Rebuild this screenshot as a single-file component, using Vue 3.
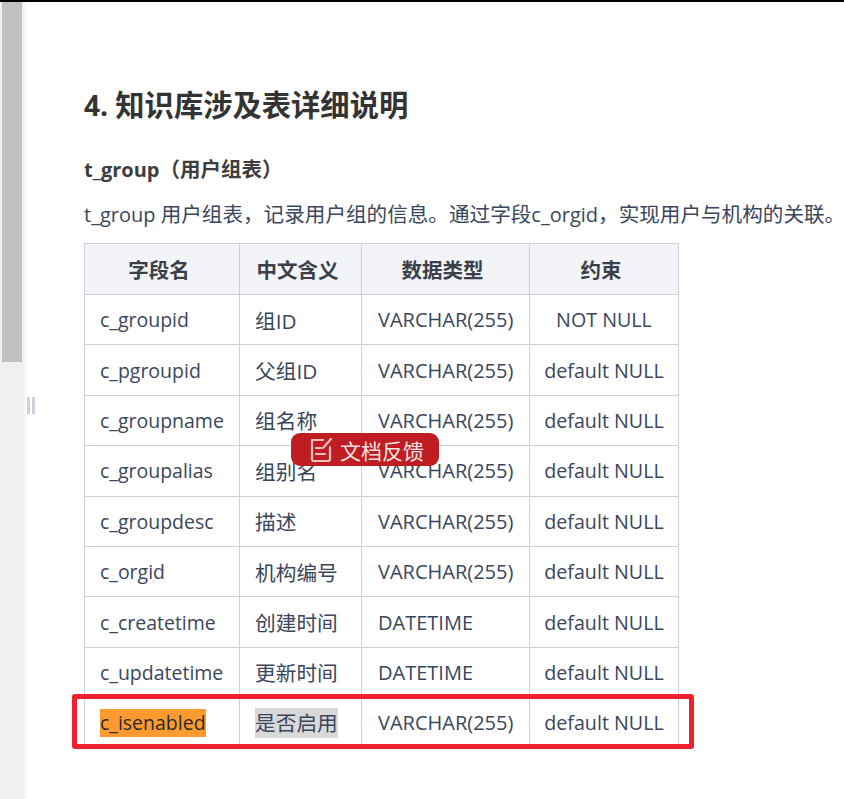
<script setup>
const rows = [
  ['c_groupid', '组ID', 'VARCHAR(255)', 'NOT NULL'],
  ['c_pgroupid', '父组ID', 'VARCHAR(255)', 'default NULL'],
  ['c_groupname', '组名称', 'VARCHAR(255)', 'default NULL'],
  ['c_groupalias', '组别名', 'VARCHAR(255)', 'default NULL'],
  ['c_groupdesc', '描述', 'VARCHAR(255)', 'default NULL'],
  ['c_orgid', '机构编号', 'VARCHAR(255)', 'default NULL'],
  ['c_createtime', '创建时间', 'DATETIME', 'default NULL'],
  ['c_updatetime', '更新时间', 'DATETIME', 'default NULL'],
]
</script>

<template>
  <div class="page">
    <div class="topline"></div>
    <div class="body">
      <aside class="rail">
        <div class="thumb"></div>
      </aside>
      <div class="handle-col">
        <div class="handle"><i></i><i></i></div>
      </div>
      <main class="doc">
        <h2>4. <span class="h2-cjk">知识库涉及表详细说明</span></h2>
        <h4>t_group<span class="h4-cjk">（用户组表）</span></h4>
        <p>t_group <span class="p-cjk">用户组表，记录用户组的信息。通过字段</span>c_orgid<span class="p-cjk">，实现用户与机构的关联。</span></p>
        <table>
          <colgroup>
            <col class="c1" /><col class="c2" /><col class="c3" /><col class="c4" />
          </colgroup>
          <thead>
            <tr><th>字段名</th><th>中文含义</th><th>数据类型</th><th>约束</th></tr>
          </thead>
          <tbody>
            <tr v-for="r in rows" :key="r[0]">
              <td class="name">{{ r[0] }}</td>
              <td class="zh">{{ r[1] }}</td>
              <td class="type">{{ r[2] }}</td>
              <td class="center">{{ r[3] }}</td>
            </tr>
            <tr>
              <td class="name"><mark class="orange">c_isenabled</mark></td>
              <td class="zh"><mark class="gray">是否启用</mark></td>
              <td class="type">VARCHAR(255)</td>
              <td class="center">default NULL</td>
            </tr>
          </tbody>
        </table>
      </main>
    </div>
    <div class="redbox"></div>
    <div class="feedback">
      <svg width="24" height="26" viewBox="0 0 24 26" fill="none" stroke="#f0c0c2" stroke-width="2.2" stroke-linecap="round" stroke-linejoin="round">
        <path d="M14 3H3v19q0 2 2 2h14q2 0 2-2V10" />
        <path d="M22 2 14 11" />
        <path d="M7 11h5M7 17h9" />
      </svg>
      <span>文档反馈</span>
    </div>
  </div>
</template>

<style scoped>
.page {
  position: relative;
  width: 844px;
  height: 799px;
  overflow: hidden;
  background: #fff;
  font-family: "Open Sans", "Noto Sans CJK SC", sans-serif;
  color: #3a465c;
}
.topline {
  height: 2px;
  background: #000;
}
.body {
  display: flex;
  height: 797px;
}
.rail {
  flex: none;
  width: 22px;
  padding-left: 2px;
  background: #f0f0f0;
  border-right: 2px solid #f6f6f6;
  box-sizing: content-box;
}
.thumb {
  width: 20px;
  height: 360px;
  background: #c1c1c1;
}
.handle-col {
  flex: none;
  width: 58px;
  padding-top: 395px;
  padding-left: 1px;
  box-sizing: border-box;
}
.handle {
  display: flex;
  gap: 2px;
}
.handle i {
  width: 3px;
  height: 17px;
  background: #ccd3df;
}
.doc {
  flex: 1;
  min-width: 0;
}
h2 {
  margin: 85px 0 0;
  font-size: 28px;
  line-height: 36px;
  font-weight: 700;
  color: #333;
}
.h2-cjk { font-size: 29.3px; }
h4 {
  margin: 32px 0 0;
  font-size: 20px;
  line-height: 28px;
  font-weight: 700;
  color: #3d3d3d;
}
.h4-cjk { font-size: 20.5px; }
p {
  margin: 16px 0 0;
  font-size: 20px;
  line-height: 28px;
  white-space: nowrap;
}
.p-cjk { font-size: 20.6px; }
table {
  margin-top: 14px;
  border-collapse: collapse;
  table-layout: fixed;
  width: 594px;
  font-size: 19.7px;
}
.c1 { width: 155px; }
.c2 { width: 122px; }
.c3 { width: 168px; }
.c4 { width: 149px; }
th, td {
  border: 1px solid #ccd0dc;
  height: 50.4px;
  padding: 0 15px;
  box-sizing: border-box;
  white-space: nowrap;
}
th {
  height: 51px;
  padding: 0 18px 0 12px;
  background: #f2f4f7;
  color: #3a3f4a;
  font-size: 20.5px;
  font-weight: 700;
  text-align: center;
}
.name { font-size: 19.5px; }
.zh { font-size: 20.7px; }
.type { font-size: 20px; padding-left: 16px; padding-right: 0; }
.center { text-align: center; padding: 0; }
mark {
  display: inline-block;
  color: inherit;
}
.orange {
  background: #ff9a2e;
  color: #2a2a2a;
  line-height: 28px;
}
.gray {
  background: #d9d9d9;
  line-height: 30px;
}
.redbox {
  position: absolute;
  left: 72px;
  top: 694px;
  width: 622px;
  height: 55px;
  box-sizing: border-box;
  border: 5px solid #f0202f;
  border-radius: 3px;
}
.feedback {
  position: absolute;
  left: 291px;
  top: 433px;
  width: 148px;
  height: 33px;
  display: flex;
  align-items: center;
  gap: 7px;
  padding-left: 18px;
  box-sizing: border-box;
  background: #c01d23;
  border-radius: 9px;
  color: #f8e4e4;
  font-size: 21px;
}
</style>
